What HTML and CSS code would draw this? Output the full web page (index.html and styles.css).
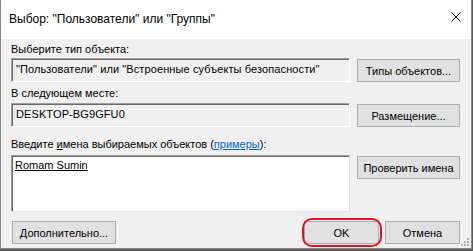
FILE: index.html
```html
<!DOCTYPE html>
<html lang="ru">
<head>
  <meta charset="UTF-8" />
  <title>Выбор: "Пользователи" или "Группы"</title>
  <link rel="stylesheet" href="styles.css">
</head>
<body>

  <div class="window">
    <div class="titlebar">
      <span class="title">Выбор: "Пользователи" или "Группы"</span>
      <svg class="close" width="10" height="10" viewBox="0 0 10 10">
        <path d="M0.5 0.5 L9.5 9.5 M9.5 0.5 L0.5 9.5" stroke="#000" stroke-width="1" fill="none" />
      </svg>
    </div>

    <div class="content">
      <div class="label first">Выберите тип объекта:</div>
      <div class="row">
        <div class="field">"Пользователи" или "Встроенные субъекты безопасности"</div>
        <button class="btn">Типы объектов...</button>
      </div>

      <div class="label second">В следующем месте:</div>
      <div class="row">
        <div class="field">DESKTOP-BG9GFU0</div>
        <button class="btn">Размещение...</button>
      </div>

      <div class="label third">Введите <u>и</u>мена выбираемых объектов (<a href="#">примеры</a>):</div>
      <div class="row">
        <div class="field names"><u>Romam Sumin</u></div>
        <button class="btn">Проверить имена</button>
      </div>

      <div class="bottom">
        <button class="btn more">Дополнительно...</button>
        <div class="actions">
          <button class="btn ok">OK</button>
          <button class="btn">Отмена</button>
        </div>
      </div>
    </div>

    <svg class="grip" width="8" height="8" viewBox="0 0 8 8">
      <rect x="6" y="0" width="2" height="2" fill="#b0b0b0" />
      <rect x="3" y="3" width="2" height="2" fill="#b0b0b0" />
      <rect x="6" y="3" width="2" height="2" fill="#b0b0b0" />
      <rect x="0" y="6" width="2" height="2" fill="#b0b0b0" />
      <rect x="3" y="6" width="2" height="2" fill="#b0b0b0" />
      <rect x="6" y="6" width="2" height="2" fill="#b0b0b0" />
    </svg>
  </div>

</body>
</html>
```

FILE: styles.css
```css
body {
  margin: 0;
  background: #5a5a5a;
  font-family: "Liberation Sans", Arial, sans-serif;
  font-size: 11px;
  color: #000;
}
.window {
  position: relative;
  width: 470px;
  height: 248px;
  border: 1px solid #8a8a8a;
  border-top: none;
  background: #f0f0f0;
}
.titlebar {
  height: 39px;
  background: #fff;
  display: flex;
  align-items: center;
  justify-content: space-between;
  padding: 0 10px 0 8px;
}
.title {
  font-size: 12px;
  margin-top: -1px;
}
.close {
  margin-top: -5px;
}
.content {
  padding: 0 11px 0 10px;
}
.label {
  line-height: 13px;
  height: 13px;
  white-space: nowrap;
}
.label.first { margin-top: 4px; }
.label.second { margin-top: 5px; }
.label.third { margin-top: 11px; }
.label a {
  color: #0066cc;
}
.row {
  display: flex;
  gap: 7px;
  margin-top: 2px;
  align-items: flex-start;
}
.label.second + .row { margin-top: 3px; }
.label.third + .row { margin-top: 4px; }
.field {
  width: 333px;
  height: 20px;
  line-height: 19px;
  border: 1px solid;
  border-color: #a0a0a0 #fff #fff #a0a0a0;
  box-shadow: inset 1px 1px #696969;
  background: #f0f0f0;
  white-space: nowrap;
  overflow: hidden;
  padding: 1px 0 1px 4px;
  letter-spacing: 0.1px;
}
.field.names {
  height: 52px;
  background: #fff;
  border-color: #a0a0a0 #e3e3e3 #e3e3e3 #a0a0a0;
  line-height: 13px;
  padding: 3px 1px 0 3px;
  letter-spacing: 0;
}
.btn {
  width: 103px;
  height: 23px;
  margin-top: 1px;
  padding: 0;
  border: 1px solid #adadad;
  background: #e1e1e1;
  font-family: inherit;
  font-size: 11px;
  color: #000;
}
.bottom {
  display: flex;
  justify-content: space-between;
  margin-top: 8px;
}
.btn.more {
  width: 104px;
  margin-left: 1px;
}
.actions {
  position: relative;
  display: flex;
  gap: 6px;
}
.actions .btn {
  width: 75px;
}
.btn.ok {
  position: relative;
}
.btn.ok::after {
  content: "";
  position: absolute;
  left: -3px;
  top: -4px;
  right: -4px;
  bottom: -4px;
  border: 2px solid #e0141e;
  border-radius: 10px;
}
.grip {
  position: absolute;
  right: 2px;
  bottom: 2px;
}
```
